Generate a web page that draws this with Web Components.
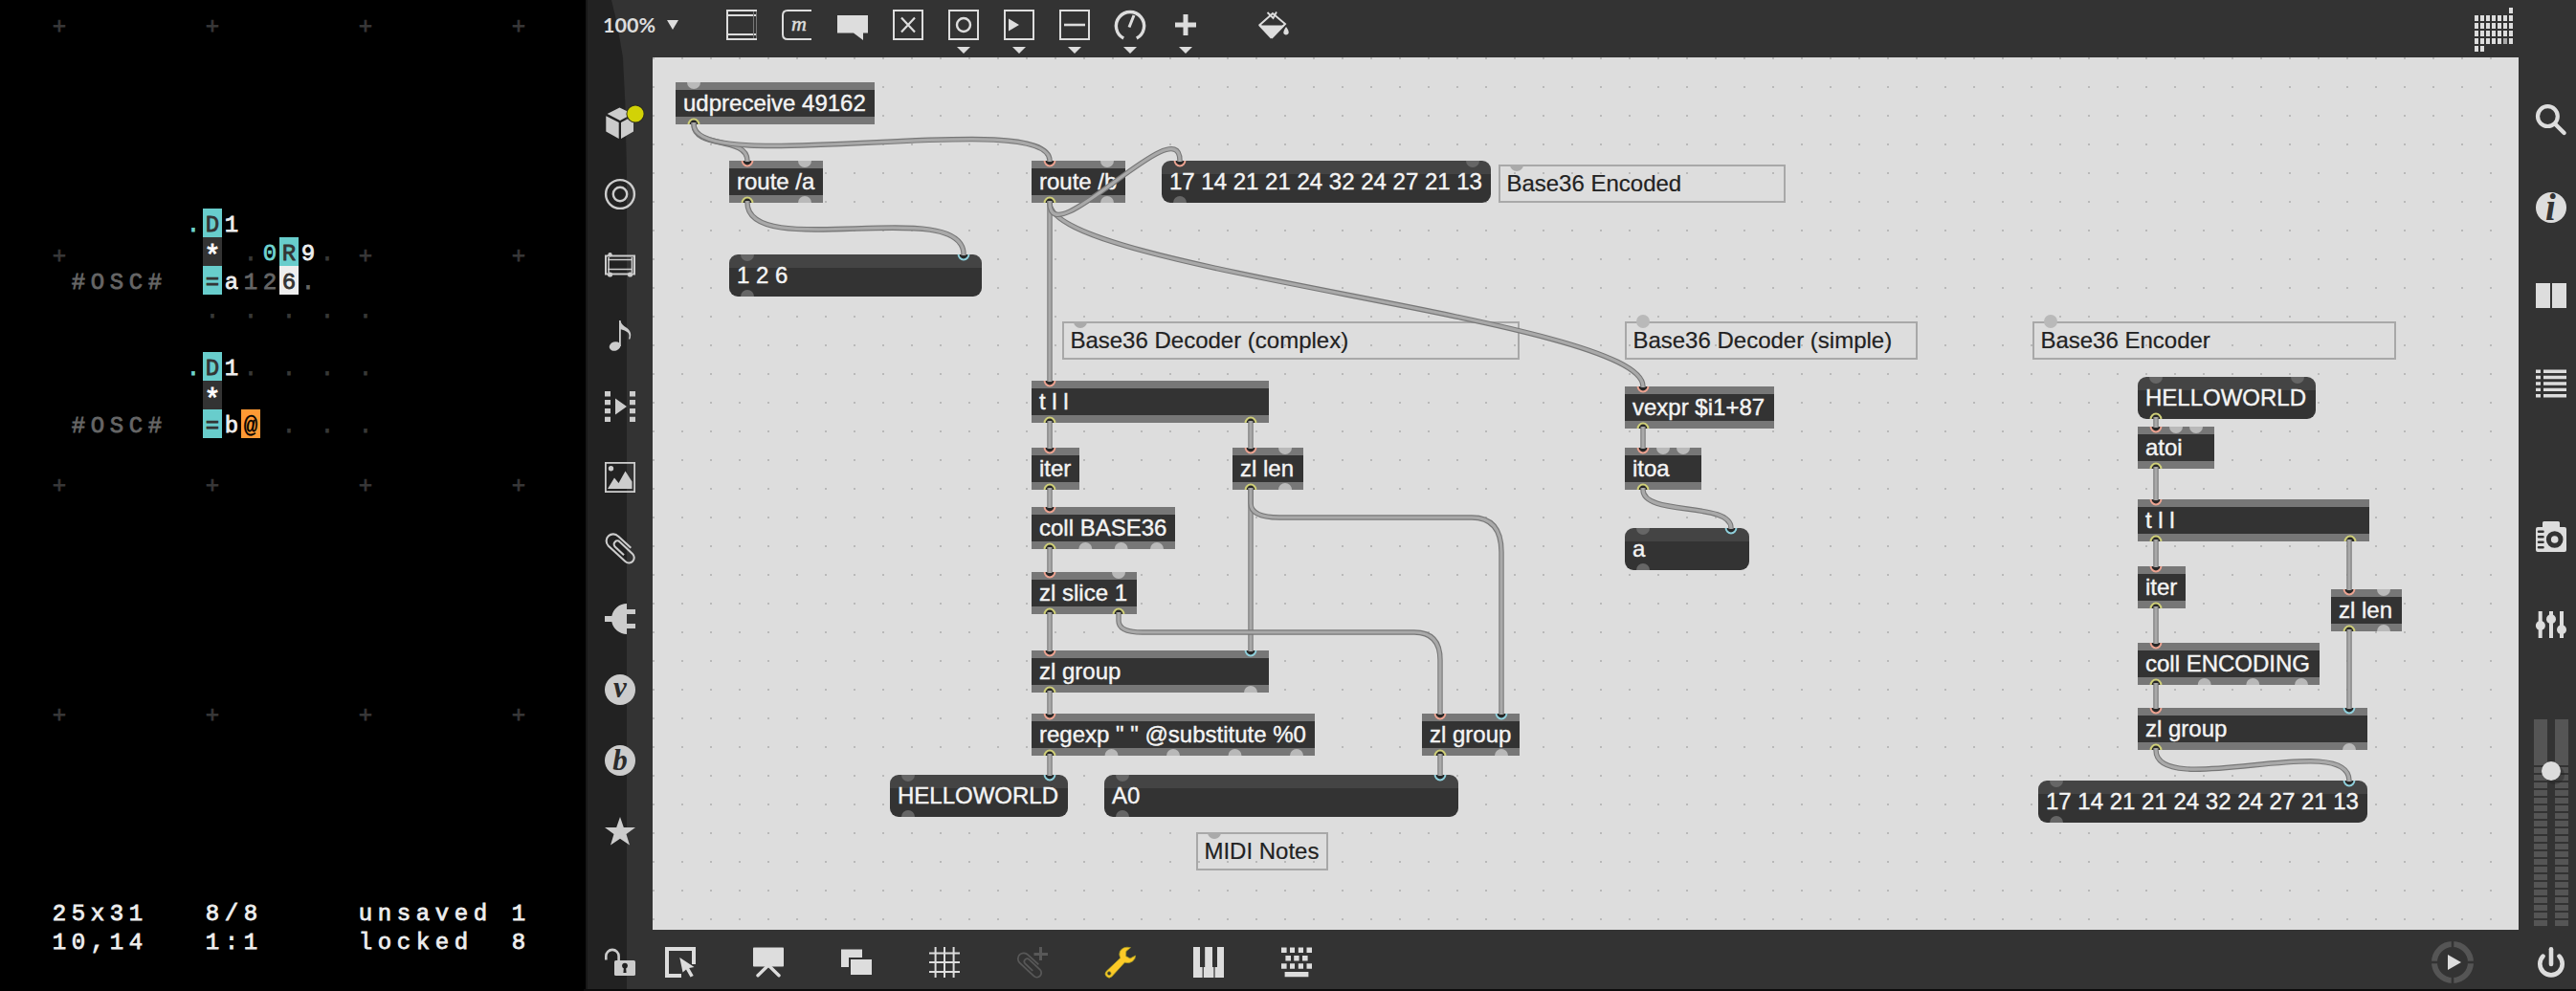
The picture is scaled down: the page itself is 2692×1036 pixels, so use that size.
<!DOCTYPE html>
<html lang="en">
<head>
<meta charset="utf-8">
<title>Orca and Max</title>
<style>
html,body{margin:0;padding:0;background:#000;width:2692px;height:1036px;overflow:hidden}
</style>
</head>
<body>
<app-desktop></app-desktop>
<script>
const sheet = (el, html) => { el.attachShadow({mode:'open'}).innerHTML = html; };

/* ---------- icons, all on a 32 x 32 box ---------- */
const CLIP = '<path d="M27.3 15.7L14 3.6A7 7 0 0 0 3.6 13.4L21.5 30A5.4 5.4 0 0 0 29 22L15.7 9.5A3.5 3.5 0 0 0 10.6 14.4L20 23.3" fill="none" stroke="currentColor" stroke-width="2.1"/>';
const BOX = '<rect x="1" y="1" width="30" height="30" fill="none" stroke="currentColor" stroke-width="2"/>';
const LETTER = (c, x, y, s) => `<circle cx="16" cy="16" r="16" fill="currentColor"/><text x="${x}" y="${y}" text-anchor="middle" font-family="'Liberation Serif',serif" font-style="italic" font-weight="700" font-size="${s}" fill="#2b2b2b">${c}</text>`;
const ICONS = {
  object:'<path d="M1 0V32M2 1H32M2 6H32M2 26H32M2 31H32" fill="none" stroke="currentColor" stroke-width="2"/><path d="M28.5 2V30M31.5 2V30" stroke="#777" stroke-width="1"/>',
  message:'<path d="M31 1H6Q1 1 1 6V26Q1 31 6 31H31" fill="none" stroke="currentColor" stroke-width="2"/><text x="18" y="21.5" text-anchor="middle" font-family="\'Liberation Serif\',serif" font-style="italic" font-size="22" stroke="currentColor" stroke-width=".5" fill="currentColor">m</text>',
  comment:'<path d="M0 6H32V24.5H27V32L17 24.5H0Z" fill="currentColor"/>',
  toggle:BOX+'<path d="M9 8.5L23 23.5M23 8.5L9 23.5" stroke="currentColor" stroke-width="2.2"/>',
  button:BOX+'<circle cx="16" cy="16" r="7" fill="none" stroke="currentColor" stroke-width="2.4"/>',
  number:BOX+'<path d="M5 9.5L16 16L5 22.5Z" fill="currentColor"/>',
  slider:BOX+'<path d="M5 16H27" stroke="currentColor" stroke-width="2.6"/>',
  dial:'<path d="M9.2 30A14.6 14.6 0 1 1 22.8 30" fill="none" stroke="currentColor" stroke-width="3.4"/><path d="M15 18.5L20 6" stroke="currentColor" stroke-width="3"/>',
  plus:'<path d="M16 5V27M5 16H27" stroke="currentColor" stroke-width="5"/>',
  bucket:'<path d="M1.5 16L15 4L28 15L14.5 29Z" fill="none" stroke="currentColor" stroke-width="2"/><path d="M0 16.5H27.5L13 30.5Z" fill="currentColor"/><path d="M9.5 3L15.5 9L19 2.5" fill="none" stroke="currentColor" stroke-width="1.8"/><path d="M29 18Q32.5 22.5 31.5 25A3 3 0 0 1 26.4 25Q25.8 22.5 29 18Z" fill="currentColor"/>',
  cube:'<path d="M2.6 6L15.5 -.5L29 6L16 13ZM1.3 8.3L14.7 15V32L1.3 24.6ZM30 8.3L17 15V32L30 24.6Z" fill="currentColor"/><circle cx="32" cy="6" r="9.6" fill="#2c2c20"/><circle cx="32" cy="6" r="8.6" fill="#d2d206"/>',
  target:'<g fill="none" stroke="currentColor"><circle cx="16" cy="16" r="14.9" stroke-width="2.4"/><circle cx="16" cy="16" r="7.2" stroke-width="2.4"/></g>',
  module:'<path d="M1 6.5H31V25.5H1Z" fill="none" stroke="currentColor" stroke-width="2"/><path d="M3 10.5H29M3 20.5H29M4 8V24M28.5 8V24" stroke="currentColor" stroke-width="1.6"/><circle cx="5.5" cy="5.3" r="2.2" fill="currentColor"/><circle cx="5.5" cy="26" r="2.6" fill="currentColor"/><circle cx="26.5" cy="26" r="2.6" fill="currentColor"/>',
  note:'<ellipse cx="10.6" cy="27" rx="6" ry="4.7" transform="rotate(-18 10.6 27)" fill="currentColor"/><path d="M15 0H16.6C17 6 23 6 26 11Q28.5 15 26 20L25 19Q26.5 15 24 12.5Q21 10 16.8 9.2V27H15Z" fill="currentColor"/>',
  film:'<path d="M0 0H6V5.5H0ZM0 9H6V14.3H0ZM0 18H6V23.2H0ZM0 26.8H6V32H0ZM26 0H32V5.5H26ZM26 9H32V14.3H26ZM26 18H32V23.2H26ZM26 26.8H32V32H26ZM11 7.5L23 16L11 24.5Z" fill="currentColor"/>',
  image:'<rect x=".9" y=".9" width="30.2" height="30.2" fill="none" stroke="currentColor" stroke-width="1.8"/><circle cx="6.5" cy="6.8" r="2.7" fill="currentColor"/><path d="M3 28L10 16.5L14.5 22L21.5 9.5L28.5 20.5V28Z" fill="currentColor"/>',
  clip:CLIP,
  plug:'<path d="M0 13H7.3A16 16 0 0 1 23 0V6H32V11H23V21H32V26H23V32A16 16 0 0 1 7.3 19H0Z" fill="currentColor"/>',
  v:LETTER('v',16,24,31), b:LETTER('b',16,25.5,31),
  info:'<circle cx="16" cy="16" r="16" fill="currentColor"/><text x="15.4" y="28.6" text-anchor="middle" font-family="\'Liberation Serif\',serif" font-style="italic" font-weight="700" font-size="39" fill="#333">i</text>',
  star:'<path d="M16 1L19.8 12H32L22.5 19L26 30.6L16 23.8L6 30.6L9.5 19L0 12H12.2Z" fill="currentColor"/>',
  lock:'<path d="M1.3 13.5V9.5A6.5 6.5 0 0 1 14.6 9.5V14" fill="none" stroke="currentColor" stroke-width="2.6"/><rect x="10" y="14" width="22" height="16" rx="1.6" fill="currentColor"/><circle cx="21" cy="19.6" r="2.9" fill="#222"/><path d="M20 20H22L22.6 27H19.4Z" fill="#222"/>',
  select:'<path d="M0 0H32V18H28V4H4V28H17V32H0Z" fill="currentColor"/><path d="M15.3 11L18.5 26.5L22 23.5L26.5 31.5L29.7 30L25.2 22L30.5 21Z" fill="currentColor"/>',
  present:'<rect y=".5" width="32" height="20" rx=".8" fill="currentColor"/><path d="M5 29.8L15 20L17 20L27 29.8" fill="none" stroke="currentColor" stroke-width="3.4" stroke-linecap="round"/>',
  windows:'<path d="M0 2.5H22V11H8V21H0Z" fill="currentColor"/><rect x="10" y="13" width="22" height="16" fill="currentColor"/>',
  grid:'<path d="M6.6 0V32M16 0V32M25.6 0V32M0 6.5H32M0 16H32M0 26H32" stroke="currentColor" stroke-width="2"/>',
  clipadd:'<g transform="translate(-.6 5.2) scale(.84)">'+CLIP+'</g><path d="M24.5 0V14M17.5 7.5H32" stroke="currentColor" stroke-width="3"/>',
  wrench:'<path fill-rule="evenodd" d="M26.5 .6Q18.5 -1 15.4 4.5Q14 8 15.8 11.5L1.2 25.3A4 4 0 0 0 6.8 31L20.3 16.2Q25 17.6 28.6 15Q31.6 12.6 31.6 9L26 12L21.6 9.6L21.8 4.6ZM4.1 25.6A2 2 0 1 1 4.1 29.6A2 2 0 1 1 4.1 25.6Z" fill="#fcca27" stroke="#a79c22" stroke-width=".8"/>',
  piano:'<path d="M0 0H7V21H9.6V32H0ZM12.2 0H20V21H21.4V32H10.8V21H12.2ZM25 0H32V32H22.6V21H25Z" fill="currentColor"/>',
  keyboard:'<path d="M0 .6H5.6V6H0ZM9 .6H14V6H9ZM17.8 .6H23V6H17.8ZM26.5 .6H32V6H26.5ZM4.4 9H10V14.4H4.4ZM13.2 9H18.6V14.4H13.2ZM22 9H27.6V14.4H22ZM0 17.2H5.6V22.8H0ZM9 17.2H14V22.8H9ZM17.8 17.2H23V22.8H17.8ZM26.5 17.2H32V22.8H26.5ZM3.6 26H28.4V31.2H3.6Z" fill="currentColor"/>',
  search:'<circle cx="12.4" cy="12.6" r="10.4" fill="none" stroke="currentColor" stroke-width="4.2"/><path d="M20 20.5L29.6 30" stroke="currentColor" stroke-width="4.4" stroke-linecap="round"/>',
  book:'<path d="M0 3H15V29H0ZM17 3H32V29H17Z" fill="currentColor"/>',
  list:'<path d="M0 3.2H5M8 3.2H32M0 9.5H5M8 9.5H32M0 16H5M8 16H32M0 22.4H5M8 22.4H32M0 28.8H5M8 28.8H32" stroke="currentColor" stroke-width="3.4"/>',
  camera:'<path d="M2 6H7V1.5Q7 0 8.5 0H23.5Q25 0 25 1.5V6H30Q32 6 32 8V30Q32 32 30 32H2Q0 32 0 30V8Q0 6 2 6Z" fill="currentColor"/><circle cx="19.7" cy="19" r="6.3" fill="none" stroke="#333" stroke-width="5"/><path d="M3 10.7H7.5M3 16.2H7.5M3 21.7H7.5M3 27.3H7.5" stroke="#333" stroke-width="2.6" stroke-linecap="round"/>',
  mixer:'<path d="M4.7 2V30M16 2V30M27 2V30" stroke="currentColor" stroke-width="4"/><g fill="currentColor"><circle cx="4.9" cy="17" r="5"/><circle cx="16" cy="10.3" r="5"/><circle cx="27" cy="21.3" r="5"/></g>',
  power:'<path d="M7.5 9.6A11.7 11.7 0 1 0 24.5 9.6" fill="none" stroke="currentColor" stroke-width="4.6" stroke-linecap="round"/><path d="M16 2.2V18" stroke="currentColor" stroke-width="4.6" stroke-linecap="round"/>',
  transport:'<circle cx="16" cy="16" r="19" fill="none" stroke="#555" stroke-width="6"/><path d="M16 -7V0M16 32V39M-7 16H0M32 16H39" stroke="#333" stroke-width="2.6"/><path d="M11 8L25 16L11 24Z" fill="currentColor"/>'
};
customElements.define('tool-icon', class extends HTMLElement {
  connectedCallback(){
    const menu = this.hasAttribute('menu');
    sheet(this, `<style>:host{display:block;flex:none;width:32px;height:32px}svg{display:block;overflow:visible}</style>
      <svg width="32" height="32" viewBox="0 0 32 32">${ICONS[this.getAttribute('name')]}${menu?'<path d="M9 39H23L16 46Z" fill="currentColor"/>':''}</svg>`);
  }
});

/* ---------- Orca grid ---------- */
customElements.define('orca-grid', class extends HTMLElement {
  connectedCallback(){
    const out = [];
    const put = (r, c, s, cls='') => [...s].forEach((ch,i)=>{ if(ch!==' ') out.push(`<span class="${cls}" style="grid-area:${r+1}/${c+i+1}">${ch}</span>`); });
    for (const r of [0,8,16,24]) for (const c of [0,8,16,24]) if(!(r===8&&c===8)) put(r,c,'+','mark cross');
    put(7,7,'.','out'); put(7,8,'D','op'); put(7,9,'1');
    put(8,8,'*','bang'); put(8,10,'.','mark'); put(8,11,'0','out'); put(8,12,'R','op'); put(8,13,'9'); put(8,14,'.','mark');
    put(9,1,'#OSC#','dim'); put(9,8,'=','op'); put(9,9,'a'); put(9,10,'12','dim'); put(9,12,'6','hot'); put(9,13,'.','dim');
    for (const c of [8,10,12,14,16]) put(10,c,'.','mark');
    put(12,7,'.','out'); put(12,8,'D','op'); put(12,9,'1');
    for (const c of [10,12,14,16]) put(12,c,'.','mark');
    put(13,8,'*','bang');
    put(14,1,'#OSC#','dim'); put(14,8,'=','op'); put(14,9,'b'); put(14,10,'@','cur');
    for (const c of [12,14,16]) put(14,c,'.','mark');
    put(31,0,'25x31'); put(31,8,'8/8'); put(31,16,'unsaved 1');
    put(32,0,'10,14'); put(32,8,'1:1'); put(32,16,'locked  8');
    sheet(this, `<style>
      :host{display:grid;box-sizing:border-box;background:#000;padding:8px 52px;color:#eee;
        grid-template-columns:repeat(25,20px);grid-template-rows:repeat(33,30px);
        font:24px/36px "Liberation Mono",monospace}
      span{height:30px;text-align:center;-webkit-text-stroke:.8px currentColor}
      .mark{color:#383838}.cross{line-height:41px}.dim{color:#666}.out{color:#6fd3cf}
      .op{background:#68cdcc;color:#333}.bang{background:#333;color:#fff;font-size:29px;line-height:44px}
      .hot{background:#eee;color:#333}.cur{background:#ff9a34;color:#000;-webkit-text-stroke-width:.4px}
    </style>${out.join('')}`);
  }
});

/* ---------- patch objects ---------- */
const OX = 682, OY = 60;
customElements.define('patch-box', class extends HTMLElement {
  connectedCallback(){
    const [x,y,w] = this.getAttribute('at').split(' ').map(Number);
    const kind = this.getAttribute('kind') || 'object';
    const h = kind==='comment' ? 40 : 44;
    this.style.cssText = `left:${x-OX}px;top:${y-OY}px;width:${w}px;height:${h}px`;
    const dimFill = kind==='object' ? '#b9b9b9' : kind==='message' ? '#666' : '#aaa';
    const ports = (name, top) => (this.getAttribute(name)||'').split(' ').filter(Boolean).map(p=>{
      const px = parseFloat(p), t = p.replace(/[\d.]/g,''), cy = top?0:h, s = top?1:0;
      const half = r => `M${px-r} ${cy}A${r} ${r} 0 0 ${1-s} ${px+r} ${cy}`;
      if (t==='f') return `<circle cx="${px}" cy="0" r="7" fill="#b9b9b9"/>`;
      if (!t) return `<path d="${half(7)}Z" fill="${dimFill}"/>`;
      const c = {r:'#eda391',c:'#8fd0dc',y:'#cfcf78'}[t];
      return `<path d="${half(5.4)}" fill="#272727" stroke="${c}" stroke-width="2"/>`;
    }).join('');
    sheet(this, `<style>
      :host{position:absolute;display:block;box-sizing:border-box;font:24px/28px "Liberation Sans",Arial,sans-serif;color:#f4f4f4;white-space:pre}
      div{box-sizing:border-box;height:100%;padding:8px 0 0 8px;-webkit-text-stroke:.4px currentColor}
      .object{background:linear-gradient(#777 8px,#333 8px,#333 36px,#777 36px)}
      .message{background:linear-gradient(#444 14px,#333 14px);border-radius:9px}
      .comment{border:2px solid #a8a8a8;color:#222;padding:4px 0 0 6.4px;-webkit-text-stroke:.2px currentColor}
      svg{position:absolute;left:0;top:0;overflow:visible}
    </style><div class="${kind}"><slot></slot></div><svg width="${w}" height="${h}">${ports('in',true)}${ports('out',false)}</svg>`);
  }
});

customElements.define('patch-cables', class extends HTMLElement {
  connectedCallback(){
    const S = (x,a,b,x2=x)=>`M${x} ${a-2}L${x2} ${b+1}`;
    const C = (x1,y1,x2,y2,k)=>`M${x1} ${y1-2}V${y1}C${x1} ${y1+k} ${x2} ${y2-k} ${x2} ${y2}V${y2+1}`;
    const cables = [
      C(725,130,781,168,26), C(725,130,1097,168,57), C(781,212,1007,266,62),
      S(1097,212,398), C(1097,212,1717,404,71), C(1097,212,1233,168,56),
      S(1097,442,468), S(1307,442,468), S(1097,512,530), S(1097,574,598), S(1097,642,680), S(1097,724,746), S(1097,790,810),
      S(1307,512,680),
      'M1307 510V526Q1307 541 1337 541H1538Q1569 541 1569 577V747',
      'M1169 640V649Q1169 661 1194 661H1478Q1505 661 1505 690V747',
      S(1505,790,810), S(1717,448,468), C(1717,512,1809,552,28),
      S(2253,438,446), S(2253,490,522), S(2253,566,592), S(2253,636,672), S(2253,716,740),
      S(2455,566,616), S(2455,660,740), C(2253,784,2455,816,53)
    ];
    sheet(this, `<style>:host{position:absolute;left:0;top:0;display:block}svg{display:block}path{fill:none}
      .edge{stroke:#777;stroke-width:5.4}.core{stroke:#a9a9a9;stroke-width:3.2}</style>
      <svg width="1950" height="912" viewBox="${OX} ${OY} 1950 912">${cables.map(d=>`<path class="edge" d="${d}"/><path class="core" d="${d}"/>`).join('')}</svg>`);
  }
});

customElements.define('patch-canvas', class extends HTMLElement {
  connectedCallback(){
    sheet(this, `<style>
      :host{display:block;position:relative;overflow:hidden;
        background:#ddd conic-gradient(from 270deg at 2px 2px,#b9b9b9 90deg,#ddd 90deg) 0 0/30px 30px}
    </style>
    <patch-box at="706 86 208" in="19" out="19y">udpreceive 49162</patch-box>
    <patch-box at="762 168 98" in="19r 79" out="19y 79">route /a</patch-box>
    <patch-box kind="message" at="762 266 264" in="19 245c" out="19">1 2 6</patch-box>
    <patch-box at="1078 168 98" in="19r 79" out="19y 79">route /b</patch-box>
    <patch-box kind="message" at="1214 168 344" in="19r 325" out="19">17 14 21 21 24 32 24 27 21 13</patch-box>
    <patch-box kind="comment" at="1566 172 300" in="19">Base36 Encoded</patch-box>
    <patch-box kind="comment" at="1110 336 478" in="19">Base36 Decoder (complex)</patch-box>
    <patch-box kind="comment" at="1698 336 306" in="19f">Base36 Decoder (simple)</patch-box>
    <patch-box kind="comment" at="2124 336 380" in="19f">Base36 Encoder</patch-box>
    <patch-box at="1078 398 248" in="19r" out="19y 229y">t l l</patch-box>
    <patch-box at="1078 468 50" in="19r" out="19y">iter</patch-box>
    <patch-box at="1288 468 74" in="19r 55" out="19y 55">zl len</patch-box>
    <patch-box at="1078 530 150" in="19r" out="19y 56.3 93.7 131">coll BASE36</patch-box>
    <patch-box at="1078 598 110" in="19r 91" out="19y 91y">zl slice 1</patch-box>
    <patch-box at="1078 680 248" in="19r 229c" out="19y 229">zl group</patch-box>
    <patch-box at="1078 746 296" in="19r" out="19y 83.5 148 212.5 277">regexp " " @substitute %0</patch-box>
    <patch-box at="1486 746 102" in="19r 83c" out="19y 83">zl group</patch-box>
    <patch-box kind="message" at="930 810 186" in="19 167c" out="19">HELLOWORLD</patch-box>
    <patch-box kind="message" at="1154 810 370" in="19 351c" out="19">A0</patch-box>
    <patch-box kind="comment" at="1250 870 138" in="19">MIDI Notes</patch-box>
    <patch-box at="1698 404 156" in="19r" out="19y">vexpr $i1+87</patch-box>
    <patch-box at="1698 468 80" in="19r 40 61" out="19y">itoa</patch-box>
    <patch-box kind="message" at="1698 552 130" in="19 111c" out="19">a</patch-box>
    <patch-box kind="message" at="2234 394 186" in="19 167" out="19y">HELLOWORLD</patch-box>
    <patch-box at="2234 446 80" in="19r 40 61" out="19y">atoi</patch-box>
    <patch-box at="2234 522 242" in="19r" out="19y 222y">t l l</patch-box>
    <patch-box at="2234 592 50" in="19r" out="19y">iter</patch-box>
    <patch-box at="2436 616 74" in="19r 55" out="19y 55">zl len</patch-box>
    <patch-box at="2234 672 190" in="19r" out="19y 69.7 120.3 171">coll ENCODING</patch-box>
    <patch-box at="2234 740 240" in="19r 221c" out="19y 221">zl group</patch-box>
    <patch-box kind="message" at="2130 816 344" in="19 325c" out="19">17 14 21 21 24 32 24 27 21 13</patch-box>
    <patch-cables></patch-cables>`);
  }
});

/* ---------- bars ---------- */
const icons = (names) => names.map(n=>`<tool-icon name="${n}"></tool-icon>`).join('');
customElements.define('top-bar', class extends HTMLElement {
  connectedCallback(){
    let cells='';
    const cell=(c,r,f='#ddd')=>cells+=`<rect x="${c*6}" y="${r*8}" width="4" height="6" fill="${f}"/>`;
    cell(6,0); for(let r=1;r<5;r++)for(let c=0;c<7;c++)cell(c,r,r===4&&c===5?'#aaa':'#ddd'); cell(0,5);cell(1,5);
    sheet(this, `<style>
      :host{display:flex;box-sizing:border-box;color:#ddd;padding:10px 66px 0 20px;align-items:flex-start}
      .zoom{display:flex;align-items:center;gap:11px;width:129px;height:32px;font:700 21.5px/32px Lato,sans-serif}
      .zoom b{font-weight:700;width:56px;white-space:nowrap}
      .tools{display:flex;gap:26px}
      .paint{margin-left:60px}.cells{margin:-2px 0 0 auto}
    </style>
    <div class="zoom"><b>100%</b><svg width="12" height="10"><path d="M0 0H12L6 10Z" fill="currentColor"/></svg></div>
    <div class="tools">${icons(['object','message','comment','toggle'])}${['button','number','slider','dial','plus'].map(n=>`<tool-icon name="${n}" menu></tool-icon>`).join('')}</div>
    <tool-icon class="paint" name="bucket"></tool-icon>
    <svg class="cells" width="40" height="46">${cells}</svg>`);
  }
});
customElements.define('side-bar', class extends HTMLElement {
  connectedCallback(){
    sheet(this, `<style>:host{display:flex;flex-direction:column;gap:42px;box-sizing:border-box;padding:53px 0 0 22px;color:#ccc}</style>
      ${icons(['cube','target','module','note','film','image','clip','plug','v','b','star'])}`);
  }
});
customElements.define('level-meter', class extends HTMLElement {
  connectedCallback(){
    sheet(this, `<style>:host{display:flex;gap:8px;position:relative;width:36px;height:216px}
      i{width:14px;background:linear-gradient(#555 48px,transparent 48px),repeating-linear-gradient(#333 0 2px,#555 2px 8px)}
      b{position:absolute;left:8px;top:44px;width:20px;height:20px;border-radius:50%;background:#ddd;box-shadow:4px 4px 0 #2226}</style><i></i><i></i><b></b>`);
  }
});
customElements.define('inspector-bar', class extends HTMLElement {
  connectedCallback(){
    sheet(this, `<style>:host{display:flex;flex-direction:column;align-items:center;box-sizing:border-box;padding:49px 0 0 8px;color:#ddd}
      .group{display:flex;flex-direction:column;gap:60px}.low{margin:128px 0 83px}</style>
      <div class="group">${icons(['search','info','book','list'])}</div>
      <div class="group low">${icons(['camera','mixer'])}</div>
      <level-meter></level-meter>`);
  }
});
customElements.define('bottom-bar', class extends HTMLElement {
  connectedCallback(){
    sheet(this, `<style>:host{display:flex;box-sizing:border-box;padding:18px 10px 0 22px;color:#ddd}
      .lock{color:#ccc;margin-right:31px}.tools{display:flex;gap:60px}
      .off{color:#585858}.play{margin:0 71px 0 auto}</style>
      <tool-icon class="lock" name="lock"></tool-icon>
      <div class="tools">${icons(['select','present','windows','grid'])}<tool-icon class="off" name="clipadd"></tool-icon>${icons(['wrench','piano','keyboard'])}</div>
      <tool-icon class="play" name="transport"></tool-icon><tool-icon name="power"></tool-icon>`);
  }
});
customElements.define('max-patcher', class extends HTMLElement {
  connectedCallback(){
    sheet(this, `<style>
      :host{display:grid;grid-template-columns:72px 1950px 60px;grid-template-rows:60px 912px 62px;box-sizing:border-box;
        height:1036px;border-bottom:2px solid #0b0b0b;background:#333;position:relative}
      :host::before{content:"";position:absolute;inset:0 auto 0 0;width:46px;
        background:linear-gradient(90deg,#000 2px,#181818 2px,#181818 4px,#222 4px);
        clip-path:polygon(0 0,29px 0,35px 25px,41px 60px,43.5px 110px,45px 180px,45px 100%,0 100%)}
      top-bar,bottom-bar{grid-column:1/-1;position:relative}
      side-bar{position:relative}
    </style><top-bar></top-bar><side-bar></side-bar><patch-canvas></patch-canvas><inspector-bar></inspector-bar><bottom-bar></bottom-bar>`);
  }
});
customElements.define('app-desktop', class extends HTMLElement {
  connectedCallback(){
    sheet(this, `<style>:host{display:grid;grid-template-columns:610px 2082px;width:2692px;height:1036px;overflow:hidden;background:#000}</style>
      <orca-grid></orca-grid><max-patcher></max-patcher>`);
  }
});
</script>
</body>
</html>
